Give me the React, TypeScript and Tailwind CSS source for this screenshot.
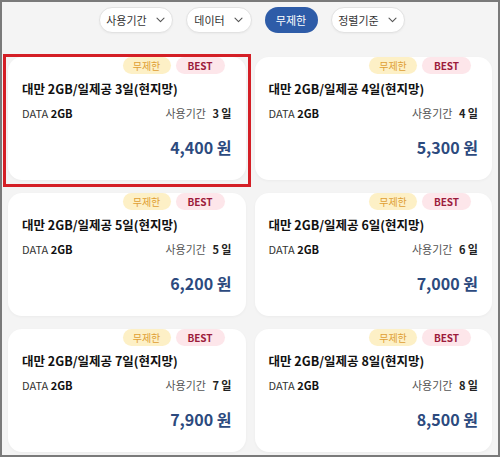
import React from "react";

const Chevron = () => (
  <svg width="9" height="6" viewBox="0 0 9 6" fill="none" className="ml-[9px]">
    <path d="M1 1.2 L4.5 4.6 L8 1.2" stroke="#555" strokeWidth="1.1" strokeLinecap="round" strokeLinejoin="round" />
  </svg>
);

const FilterBtn = ({ label, w }: { label: string; w: string }) => (
  <div
    className={`${w} h-[26px] rounded-full bg-white border border-[#e2e2e2] flex items-center justify-center text-[11px] text-[#333] shadow-[0_1px_2px_rgba(0,0,0,0.04)]`}
  >
    <span>{label}</span>
    <Chevron />
  </div>
);

const items = [
  { days: 3, price: "4,400" },
  { days: 4, price: "5,300" },
  { days: 5, price: "6,200" },
  { days: 6, price: "7,000" },
  { days: 7, price: "7,900" },
  { days: 8, price: "8,500" },
];

const Card = ({ days, price }: { days: number; price: string }) => (
  <div className="h-[123px] bg-white rounded-[14px] shadow-[0_1px_3px_rgba(0,0,0,0.04)] px-[14px] flex flex-col">
    <div className="flex justify-end gap-[5px] pr-[7px] h-[17px]">
      <div className="w-[48px] h-[17px] rounded-full bg-[#fdf0c6] text-[#df9f34] text-[10px] flex items-center justify-center leading-none">
        무제한
      </div>
      <div className="w-[49px] h-[17px] rounded-full bg-[#fde6ea] text-[#9c1b3b] text-[10px] font-bold flex items-center justify-center leading-none">
        BEST
      </div>
    </div>
    <div className="mt-[6px] text-[12.5px] leading-[18px] font-bold text-[#111]">
      대만 2GB/일제공 {days}일(현지망)
    </div>
    <div className="mt-[7px] flex justify-between items-center text-[11px] leading-[16px]">
      <div className="text-[#333]">
        DATA <span className="font-bold text-[#111]">2GB</span>
      </div>
      <div className="text-[#555]">
        사용기간 <span className="ml-[4px] font-bold text-[#222]">{days} 일</span>
      </div>
    </div>
    <div className="mt-[14px] text-right text-[16px] leading-[24px] font-bold text-[#2c4a7e]">
      {price} 원
    </div>
  </div>
);

export default function App() {
  return (
    <div
      className="relative w-[500px] h-[457px] overflow-hidden border-2 border-[#7a7a7a] bg-[#f4f4f4]"
      style={{ fontFamily: '"Noto Sans CJK KR", "Noto Sans", sans-serif' }}
    >
      <div className="flex justify-center gap-[13px] pt-[5px] pl-[3px]">
        <FilterBtn label="사용기간" w="w-[74px]" />
        <FilterBtn label="데이터" w="w-[66px]" />
        <div className="w-[53px] h-[26px] rounded-full bg-[#2e5ca8] text-white text-[11px] flex items-center justify-center">
          무제한
        </div>
        <FilterBtn label="정렬기준" w="w-[74px]" />
      </div>
      <div className="grid grid-cols-2 gap-x-[9px] gap-y-[13px] pl-[6px] pr-[6px] mt-[24px]">
        {items.map((it) => (
          <Card key={it.days} {...it} />
        ))}
      </div>
      <div className="absolute left-[1px] top-[52px] w-[248px] h-[133px] border-[3px] border-[#d41f26] pointer-events-none" />
    </div>
  );
}
